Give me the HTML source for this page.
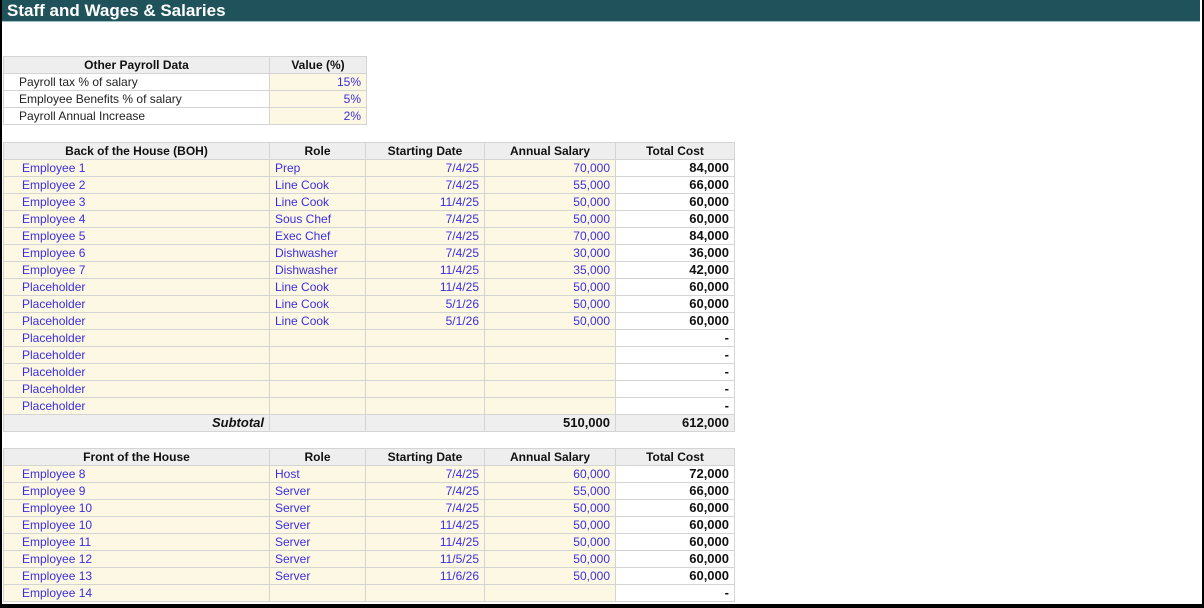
<!DOCTYPE html>
<html><head><style>
body{margin:0;width:1204px;height:608px;overflow:hidden;background:#fff;font-family:"Liberation Sans",Arial,sans-serif;position:relative}
.frame{position:absolute;left:0;top:0;width:1200px;height:604px;border:2px solid #000;border-top:0;}
.title{position:absolute;left:2px;top:0;width:1198px;height:22px;background:#1f525a;border-bottom:1px solid #9fc0c4;color:#fff;font-weight:bold;font-size:17px;line-height:22px;padding-left:5px;box-sizing:border-box}
table{position:absolute;border-collapse:collapse;table-layout:fixed;font-size:12px}
td{height:16px;border:1px solid #d4d4d4;padding:0 5px;white-space:nowrap;overflow:hidden;line-height:16px}
.h td{background:#eeeeee;font-weight:bold;text-align:center;color:#111}
.b{background:#fdf8e3;color:#3a2ee0}
.r{text-align:right}
.t{background:#fff;font-weight:bold;text-align:right;color:#111;font-size:13px}
.w{background:#fff;color:#222}
.s td{background:#efefef;font-weight:bold;color:#111;font-size:13px}
</style></head><body>
<div class="frame"></div>
<div class="title">Staff and Wages &amp; Salaries</div>

<table style="left:3px;top:56px;width:363px">
<col style="width:266px"><col style="width:97px">
<tr class="h"><td>Other Payroll Data</td><td>Value (%)</td></tr>
<tr><td class="w" style="padding-left:15px">Payroll tax % of salary</td><td class="b r">15%</td></tr>
<tr><td class="w" style="padding-left:15px">Employee Benefits % of salary</td><td class="b r">5%</td></tr>
<tr><td class="w" style="padding-left:15px">Payroll Annual Increase</td><td class="b r">2%</td></tr>
</table>

<table style="left:3px;top:142px;width:731px">
<col style="width:266px"><col style="width:96px"><col style="width:119px"><col style="width:131px"><col style="width:119px">
<tr class="h"><td>Back of the House (BOH)</td><td>Role</td><td>Starting Date</td><td>Annual Salary</td><td>Total Cost</td></tr>
<tr><td class="b" style="padding-left:18px">Employee 1</td><td class="b">Prep</td><td class="b r">7/4/25</td><td class="b r">70,000</td><td class="t">84,000</td></tr>
<tr><td class="b" style="padding-left:18px">Employee 2</td><td class="b">Line Cook</td><td class="b r">7/4/25</td><td class="b r">55,000</td><td class="t">66,000</td></tr>
<tr><td class="b" style="padding-left:18px">Employee 3</td><td class="b">Line Cook</td><td class="b r">11/4/25</td><td class="b r">50,000</td><td class="t">60,000</td></tr>
<tr><td class="b" style="padding-left:18px">Employee 4</td><td class="b">Sous Chef</td><td class="b r">7/4/25</td><td class="b r">50,000</td><td class="t">60,000</td></tr>
<tr><td class="b" style="padding-left:18px">Employee 5</td><td class="b">Exec Chef</td><td class="b r">7/4/25</td><td class="b r">70,000</td><td class="t">84,000</td></tr>
<tr><td class="b" style="padding-left:18px">Employee 6</td><td class="b">Dishwasher</td><td class="b r">7/4/25</td><td class="b r">30,000</td><td class="t">36,000</td></tr>
<tr><td class="b" style="padding-left:18px">Employee 7</td><td class="b">Dishwasher</td><td class="b r">11/4/25</td><td class="b r">35,000</td><td class="t">42,000</td></tr>
<tr><td class="b" style="padding-left:18px">Placeholder</td><td class="b">Line Cook</td><td class="b r">11/4/25</td><td class="b r">50,000</td><td class="t">60,000</td></tr>
<tr><td class="b" style="padding-left:18px">Placeholder</td><td class="b">Line Cook</td><td class="b r">5/1/26</td><td class="b r">50,000</td><td class="t">60,000</td></tr>
<tr><td class="b" style="padding-left:18px">Placeholder</td><td class="b">Line Cook</td><td class="b r">5/1/26</td><td class="b r">50,000</td><td class="t">60,000</td></tr>
<tr><td class="b" style="padding-left:18px">Placeholder</td><td class="b"></td><td class="b"></td><td class="b"></td><td class="t">-</td></tr>
<tr><td class="b" style="padding-left:18px">Placeholder</td><td class="b"></td><td class="b"></td><td class="b"></td><td class="t">-</td></tr>
<tr><td class="b" style="padding-left:18px">Placeholder</td><td class="b"></td><td class="b"></td><td class="b"></td><td class="t">-</td></tr>
<tr><td class="b" style="padding-left:18px">Placeholder</td><td class="b"></td><td class="b"></td><td class="b"></td><td class="t">-</td></tr>
<tr><td class="b" style="padding-left:18px">Placeholder</td><td class="b"></td><td class="b"></td><td class="b"></td><td class="t">-</td></tr>
<tr class="s"><td class="r"><i>Subtotal</i></td><td></td><td></td><td class="r">510,000</td><td class="r">612,000</td></tr>
</table>

<table style="left:3px;top:448px;width:731px">
<col style="width:266px"><col style="width:96px"><col style="width:119px"><col style="width:131px"><col style="width:119px">
<tr class="h"><td>Front of the House</td><td>Role</td><td>Starting Date</td><td>Annual Salary</td><td>Total Cost</td></tr>
<tr><td class="b" style="padding-left:18px">Employee 8</td><td class="b">Host</td><td class="b r">7/4/25</td><td class="b r">60,000</td><td class="t">72,000</td></tr>
<tr><td class="b" style="padding-left:18px">Employee 9</td><td class="b">Server</td><td class="b r">7/4/25</td><td class="b r">55,000</td><td class="t">66,000</td></tr>
<tr><td class="b" style="padding-left:18px">Employee 10</td><td class="b">Server</td><td class="b r">7/4/25</td><td class="b r">50,000</td><td class="t">60,000</td></tr>
<tr><td class="b" style="padding-left:18px">Employee 10</td><td class="b">Server</td><td class="b r">11/4/25</td><td class="b r">50,000</td><td class="t">60,000</td></tr>
<tr><td class="b" style="padding-left:18px">Employee 11</td><td class="b">Server</td><td class="b r">11/4/25</td><td class="b r">50,000</td><td class="t">60,000</td></tr>
<tr><td class="b" style="padding-left:18px">Employee 12</td><td class="b">Server</td><td class="b r">11/5/25</td><td class="b r">50,000</td><td class="t">60,000</td></tr>
<tr><td class="b" style="padding-left:18px">Employee 13</td><td class="b">Server</td><td class="b r">11/6/26</td><td class="b r">50,000</td><td class="t">60,000</td></tr>
<tr><td class="b" style="padding-left:18px">Employee 14</td><td class="b"></td><td class="b"></td><td class="b"></td><td class="t">-</td></tr>
</table>
<div style="position:absolute;left:0;top:604px;width:1204px;height:4px;background:#000"></div>
</body></html>
